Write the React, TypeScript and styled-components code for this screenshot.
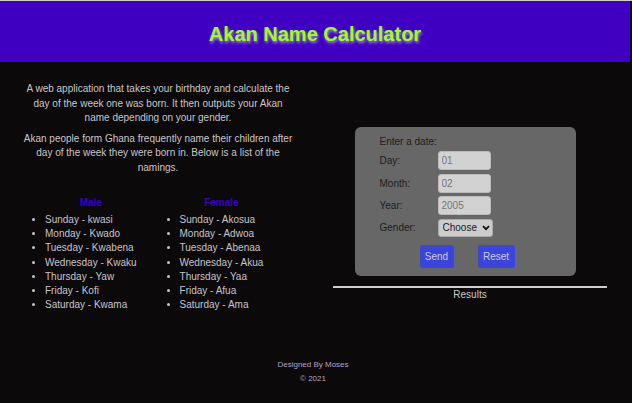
import React from "react";
import styled, { createGlobalStyle } from "styled-components";

const Global = createGlobalStyle`
  html, body { margin: 0; padding: 0; background: #0b0909; }
  body {
    font-family: "Liberation Sans", Arial, sans-serif;
    font-size: 10px;
    color: #c8c8c8;
    border-top: 1px solid #cfcfcf;
  }
  * { box-sizing: border-box; }
`;

const Page = styled.div`
  width: 632px;
  min-height: 402px;
  display: flex;
  flex-direction: column;
`;

const Header = styled.header`
  height: 61px;
  margin-right: 2px;
  background: #4000c2;
  display: flex;
  align-items: center;
  justify-content: center;
`;

const Title = styled.h1`
  margin: 0;
  padding-top: 5px;
  font-size: 20px;
  font-weight: bold;
  color: #9eff1c;
  text-shadow: 1px 2px 3px rgba(200, 190, 220, 0.75);
`;

const Main = styled.main`
  display: grid;
  grid-template-columns: 316px 316px;
`;

const Intro = styled.section`
  padding: 20px 22px 0 22px;
  display: flex;
  flex-direction: column;
`;

const Para = styled.p`
  margin: 0 0 6px 0;
  text-align: center;
  line-height: 14.5px;
  color: #c9c7c9;
`;

const Lists = styled.div`
  display: flex;
  gap: 43px;
  padding-left: 23px;
  margin-top: 15px;
`;

const Column = styled.div`
  display: flex;
  flex-direction: column;
`;

const ColHead = styled.h3`
  margin: 0 0 3px 0;
  font-size: 10px;
  font-weight: bold;
  color: #3a00c4;
  text-align: center;
  line-height: 14px;
`;

const List = styled.ul`
  margin: 0;
  padding: 0;
  list-style: disc outside;
`;

const Item = styled.li`
  line-height: 14.2px;
  color: #c6c4cc;
`;

const Side = styled.section`
  display: flex;
  flex-direction: column;
  align-items: center;
  padding-top: 65px;
  padding-right: 8px;
`;

const Card = styled.form`
  width: 221px;
  margin-left: -10px;
  background: #676767;
  border-radius: 6px;
  padding: 8px 0 8px 25px;
  display: flex;
  flex-direction: column;
  color: #1d1d1d;
`;

const Caption = styled.div`
  line-height: 13px;
  margin-bottom: 3px;
`;

const Row = styled.label`
  display: grid;
  grid-template-columns: 58px auto;
  align-items: center;
  margin-bottom: 3.5px;
`;

const Field = styled.input`
  width: 53px;
  height: 19px;
  border: 1px solid #bbb;
  border-radius: 3px;
  background: #d2d2d2;
  color: #757575;
  font-family: inherit;
  font-size: 10px;
  padding: 0 3px;
  outline: none;
`;

const SelectWrap = styled.span`
  position: relative;
  width: 55px;
  height: 18px;
  display: inline-block;
`;

const Select = styled.select`
  appearance: none;
  width: 55px;
  height: 18px;
  border: 1px solid #aaa;
  border-radius: 3px;
  background: #cccccc;
  color: #1a1a1a;
  font-family: inherit;
  font-size: 10px;
  padding: 0 0 0 4px;
  outline: none;
`;

const Chevron = styled.svg`
  position: absolute;
  right: 3px;
  top: 6px;
  pointer-events: none;
`;

const Buttons = styled.div`
  display: flex;
  gap: 24px;
  padding-left: 40px;
  margin-top: 4.5px;
`;

const Btn = styled.button<{ $w: number }>`
  width: ${(p) => p.$w}px;
  height: 23px;
  border: none;
  border-radius: 3px;
  background: #3b45d9;
  color: #c9cbe6;
  font-family: inherit;
  font-size: 10px;
  padding: 0;
`;

const Rule = styled.hr`
  width: 274px;
  margin: 10px 0 0 0;
  border: none;
  height: 2px;
  background: #cfcfcf;
`;

const Results = styled.div`
  margin-top: 0;
  line-height: 13px;
  color: #c9c9c9;
`;

const Footer = styled.footer`
  margin-top: 46px;
  padding-right: 6px;
  display: flex;
  flex-direction: column;
  align-items: center;
  font-size: 8px;
  line-height: 14px;
  color: #b3a3c6;
`;

const male = [
  "Sunday - kwasi",
  "Monday - Kwado",
  "Tuesday - Kwabena",
  "Wednesday - Kwaku",
  "Thursday - Yaw",
  "Friday - Kofi",
  "Saturday - Kwama",
];
const female = [
  "Sunday - Akosua",
  "Monday - Adwoa",
  "Tuesday - Abenaa",
  "Wednesday - Akua",
  "Thursday - Yaa",
  "Friday - Afua",
  "Saturday - Ama",
];

export default function App() {
  return (
    <Page>
      <Global />
      <Header>
        <Title>Akan Name Calculator</Title>
      </Header>
      <Main>
        <Intro>
          <Para>
            A web application that takes your birthday and calculate the day of
            the week one was born. It then outputs your Akan name depending on
            your gender.
          </Para>
          <Para>
            Akan people form Ghana frequently name their children after day of
            the week they were born in. Below is a list of the namings.
          </Para>
          <Lists>
            <Column>
              <ColHead>Male</ColHead>
              <List>
                {male.map((m) => (
                  <Item key={m}>{m}</Item>
                ))}
              </List>
            </Column>
            <Column>
              <ColHead>Female</ColHead>
              <List>
                {female.map((m) => (
                  <Item key={m}>{m}</Item>
                ))}
              </List>
            </Column>
          </Lists>
        </Intro>
        <Side>
          <Card onSubmit={(e) => e.preventDefault()}>
            <Caption>Enter a date:</Caption>
            <Row>
              <span>Day:</span>
              <Field placeholder="01" />
            </Row>
            <Row>
              <span>Month:</span>
              <Field placeholder="02" />
            </Row>
            <Row>
              <span>Year:</span>
              <Field placeholder="2005" />
            </Row>
            <Row>
              <span>Gender:</span>
              <SelectWrap>
                <Select defaultValue="">
                  <option value="">Choose</option>
                  <option value="m">Male</option>
                  <option value="f">Female</option>
                </Select>
                <Chevron width="8" height="6" viewBox="0 0 8 6">
                  <path d="M1 1.2 L4 4.2 L7 1.2" stroke="#111" strokeWidth="1.8" fill="none" />
                </Chevron>
              </SelectWrap>
            </Row>
            <Buttons>
              <Btn $w={34} type="submit">Send</Btn>
              <Btn $w={37} type="reset">Reset</Btn>
            </Buttons>
          </Card>
          <Rule />
          <Results>Results</Results>
        </Side>
      </Main>
      <Footer>
        <div>Designed By Moses</div>
        <div>© 2021</div>
      </Footer>
    </Page>
  );
}
